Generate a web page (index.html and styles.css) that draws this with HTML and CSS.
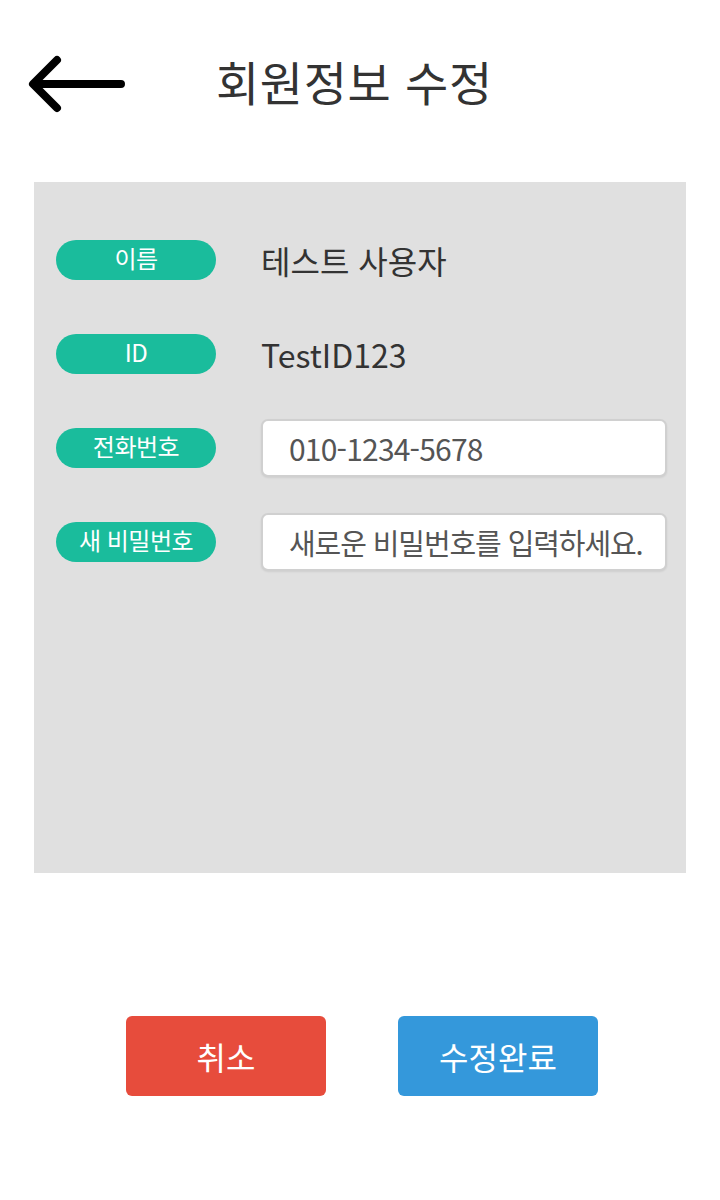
FILE: index.html
```html
<!DOCTYPE html>
<html lang="ko">
<head>
<meta charset="utf-8">
<title>회원정보 수정</title>
<link rel="stylesheet" href="styles.css">
</head>
<body>
<div class="page">
  <header class="header">
    <button class="back" aria-label="뒤로">
      <svg width="100" height="60" viewBox="0 0 100 60">
        <path d="M94 30 H7 M30 6 L6 30 L30 54" fill="none" stroke="#000" stroke-width="8" stroke-linecap="round" stroke-linejoin="round"/>
      </svg>
    </button>
    <h1 class="title">회원정보 수정</h1>
  </header>

  <section class="panel">
    <div class="row">
      <span class="pill">이름</span>
      <span class="value">테스트 사용자</span>
    </div>
    <div class="row">
      <span class="pill">ID</span>
      <span class="value">TestID123</span>
    </div>
    <div class="row">
      <span class="pill">전화번호</span>
      <input class="field" type="text" value="010-1234-5678">
    </div>
    <div class="row">
      <span class="pill">새 비밀번호</span>
      <input class="field pw" type="password" placeholder="새로운 비밀번호를 입력하세요.">
    </div>
  </section>

  <div class="actions">
    <button class="btn cancel">취소</button>
    <button class="btn done">수정완료</button>
  </div>
</div>
</body>
</html>
```

FILE: styles.css
```css
html, body {
  margin: 0;
  padding: 0;
  background: #fff;
}
body {
  font-family: "Noto Sans CJK KR", "Noto Sans", sans-serif;
  color: #333;
}
.page {
  width: 720px;
}
.header {
  height: 182px;
  display: flex;
  align-items: flex-start;
  padding-top: 54px;
  box-sizing: border-box;
}
.back {
  border: 0;
  background: none;
  padding: 0;
  margin-left: 27px;
  width: 100px;
  height: 60px;
  display: block;
}
.back svg { display: block; }
.title {
  margin: -3px 0 0 89px;
  font-size: 47px;
  letter-spacing: 0.6px;
  font-weight: 400;
  line-height: 60px;
  color: #333;
}
.panel {
  margin: 0 34px;
  height: 691px;
  background: #e0e0e0;
  box-sizing: border-box;
  padding: 49px 19px 0 22px;
  display: flex;
  flex-direction: column;
  gap: 36px;
}
.row {
  height: 58px;
  display: flex;
  align-items: center;
  gap: 45px;
}
.pill {
  flex: none;
  width: 160px;
  height: 40px;
  border-radius: 20px;
  background: #1abc9c;
  color: #fff;
  font-size: 24px;
  line-height: 36px;
  text-align: center;
  letter-spacing: -0.5px;
}
.value {
  font-size: 32px;
  color: #333;
  line-height: 40px;
}
.field {
  flex: 1;
  height: 58px;
  box-sizing: border-box;
  border: 2px solid #d0d0d0;
  border-radius: 7px;
  background: #fff;
  padding: 0 0 0 26px;
  font-family: "Noto Sans CJK KR", "Noto Sans", sans-serif;
  font-size: 30px;
  letter-spacing: -0.8px;
  color: #555;
  outline: none;
  box-shadow: 0 1px 2px rgba(0,0,0,0.08);
  min-width: 0;
}
.field::placeholder {
  color: #555;
  opacity: 1;
}
.pw {
  font-size: 29px;
  letter-spacing: -1.1px;
}
.actions {
  display: flex;
  justify-content: center;
  gap: 72px;
  margin-top: 143px;
  padding-left: 4px;
}
.btn {
  width: 200px;
  height: 80px;
  border: 0;
  border-radius: 6px;
  color: #fff;
  font-family: "Noto Sans CJK KR", "Noto Sans", sans-serif;
  font-size: 32px;
  padding: 0;
}
.cancel { background: #e74c3c; }
.done { background: #3498db; }
```
